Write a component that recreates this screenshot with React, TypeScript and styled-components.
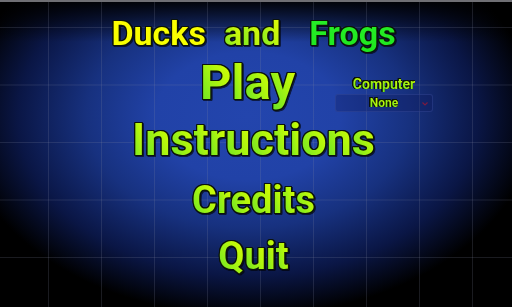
import React from 'react';
import styled, { createGlobalStyle } from 'styled-components';

const GlobalStyle = createGlobalStyle`
  html, body {
    margin: 0;
    padding: 0;
    width: 512px;
    height: 307px;
    overflow: hidden;
    background: #000;
  }
`;

const MENU_FILL = 'linear-gradient(to bottom left, #e4ff00 0%, #b4f70c 40%, #5ee22a 100%)';

const Screen = styled.div`
  box-sizing: border-box;
  width: 512px;
  height: 307px;
  padding: 14px 5px 0 0;
  display: flex;
  flex-direction: column;
  align-items: center;
  font-family: Roboto, 'Liberation Sans', sans-serif;
  font-weight: 700;
  background-color: #000;
  background-image:
    linear-gradient(#6f6f74, #6f6f74),
    linear-gradient(to right, rgba(130, 135, 160, 0.2) 0 1px, transparent 1px),
    linear-gradient(to bottom, rgba(130, 135, 160, 0.2) 0 1px, transparent 1px),
    linear-gradient(to bottom, rgba(0, 0, 0, 0.95) 0, rgba(0, 0, 0, 0) 42px),
    radial-gradient(
      ellipse 288px 200px at 248px 116px,
      #2345ad 0%,
      #2142a7 32%,
      #17317f 56%,
      #0a1645 80%,
      #000 100%
    );
  background-size: 100% 2px, 53px 100%, 100% 57.5px, 100% 100%, 100% 100%;
  background-position: 0 0, -5px 0, 0 27px, 0 0, 0 0;
  background-repeat: no-repeat, repeat-x, repeat-y, no-repeat, no-repeat;
`;

const Outlined = styled.div<{ $size: number; $mt?: number; $thin?: boolean }>`
  font-size: ${(p) => p.$size}px;
  line-height: 1.172;
  margin-top: ${(p) => p.$mt ?? 0}px;
  white-space: nowrap;
  cursor: pointer;
  filter: ${(p) => p.$thin
    ? 'drop-shadow(0.6px 0 0 #0c140a) drop-shadow(-0.6px 0 0 #0c140a) drop-shadow(0 0.6px 0 #0c140a) drop-shadow(0 -0.6px 0 #0c140a)'
    : 'drop-shadow(1px 0 0 #0c140a) drop-shadow(-1px 0 0 #0c140a) drop-shadow(0 1px 0 #0c140a) drop-shadow(0 -1px 0 #0c140a) drop-shadow(1px 1.5px 0.5px rgba(0, 0, 0, 0.6))'};
`;

const Glyph = styled.span<{ $fill: string }>`
  background-image: ${(p) => p.$fill};
  -webkit-background-clip: text;
  background-clip: text;
  color: transparent;
`;

const TitleRow = styled.div`
  display: flex;
  align-items: baseline;
`;

const TitleWord = styled(Outlined)<{ $gap?: number }>`
  margin-left: ${(p) => p.$gap ?? 0}px;
  cursor: default;
`;

const PlayRow = styled.div`
  display: grid;
  grid-template-columns: 1fr auto 1fr;
  width: 100%;
  box-sizing: border-box;
  padding-right: 12px;
`;

const PlayCell = styled.div`
  grid-column: 2;
`;

const SidePanel = styled.div`
  grid-column: 3;
  align-self: start;
  margin: 22px 0 0 40px;
  width: 98px;
  display: flex;
  flex-direction: column;
  align-items: center;
  gap: 2px;
`;

const SelectBox = styled.div`
  box-sizing: border-box;
  position: relative;
  width: 98px;
  height: 18px;
  border-radius: 3px;
  border: 1px solid rgba(60, 80, 160, 0.4);
  background: rgba(12, 24, 90, 0.3);
  display: flex;
  align-items: center;
  justify-content: center;
  cursor: pointer;
`;

const Chevron = styled.svg`
  position: absolute;
  right: 3px;
  top: 6px;
`;

function Fancy ({ text, fill }: { text: string; fill: string }) {
  return (
    <>
      {text.split('').map((ch, i) => (
        <Glyph
          $fill={fill}
          key={i}
        >
          {ch}
        </Glyph>
      ))}
    </>
  );
}

export default function App () {
  return (
    <>
      <GlobalStyle />
      <Screen>
        <TitleRow>
          <TitleWord $size={34}>
            <Fancy
              fill='linear-gradient(#ffff00, #f4ff00)'
              text='Ducks'
            />
          </TitleWord>
          <TitleWord
            $gap={18}
            $size={34}
          >
            <Fancy
              fill='linear-gradient(to bottom left, #f0ff00 0%, #bff410 45%, #6ae826 100%)'
              text='and'
            />
          </TitleWord>
          <TitleWord
            $gap={29}
            $size={34}
          >
            <Fancy
              fill='linear-gradient(#28f028, #1ee61e)'
              text='Frogs'
            />
          </TitleWord>
        </TitleRow>

        <PlayRow>
          <PlayCell>
            <Outlined $size={49}>
              <Fancy
                fill={MENU_FILL}
                text='Play'
              />
            </Outlined>
          </PlayCell>
          <SidePanel>
            <Outlined
              $size={14}
              $thin
            >
              <Fancy
                fill={MENU_FILL}
                text='Computer'
              />
            </Outlined>
            <SelectBox>
              <Outlined
                $size={12}
                $thin
              >
                <Fancy
                  fill={MENU_FILL}
                  text='None'
                />
              </Outlined>
              <Chevron
                height='6'
                viewBox='0 0 8 6'
                width='8'
              >
                <polyline
                  fill='none'
                  points='1.5,1.5 4,4 6.5,1.5'
                  stroke='#7a1a40'
                  strokeWidth='1.2'
                />
              </Chevron>
            </SelectBox>
          </SidePanel>
        </PlayRow>

        <Outlined
          $mt={2}
          $size={45}
        >
          <Fancy
            fill={MENU_FILL}
            text='Instructions'
          />
        </Outlined>
        <Outlined
          $mt={11}
          $size={38}
        >
          <Fancy
            fill={MENU_FILL}
            text='Credits'
          />
        </Outlined>
        <Outlined
          $mt={11}
          $size={38}
        >
          <Fancy
            fill={MENU_FILL}
            text='Quit'
          />
        </Outlined>
      </Screen>
    </>
  );
}
